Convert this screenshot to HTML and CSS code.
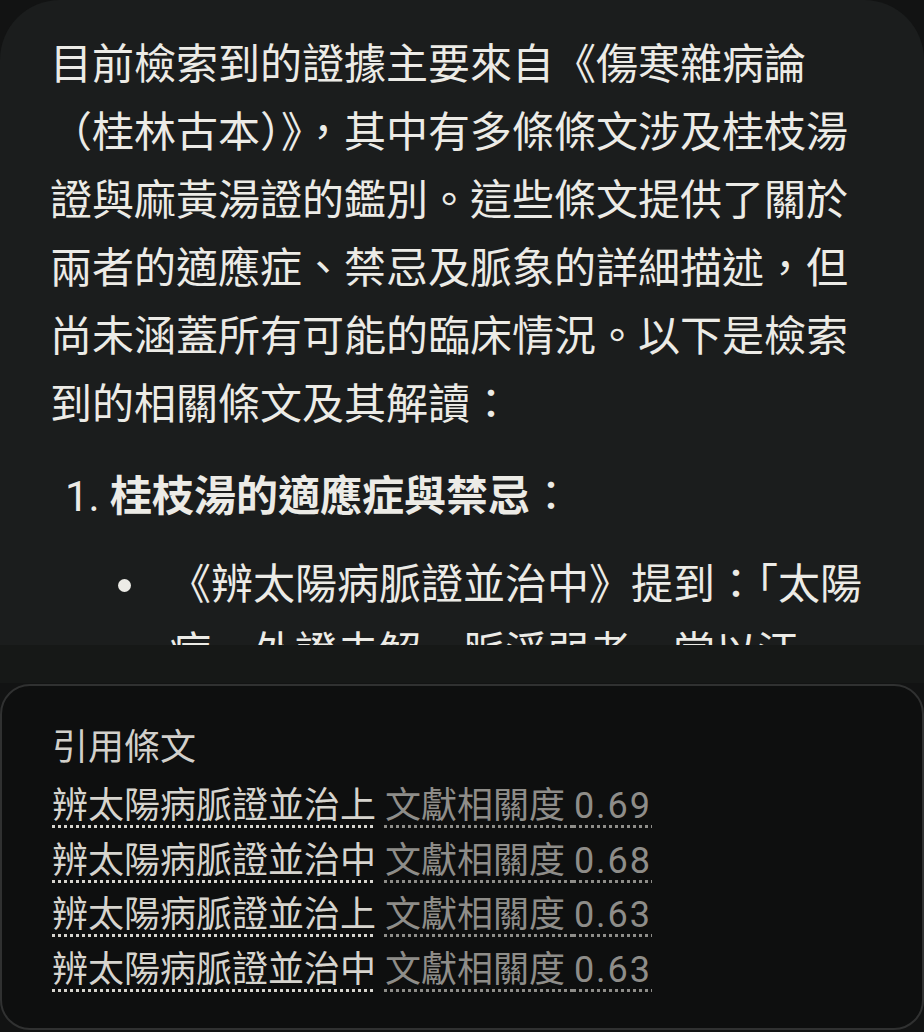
FILE: index.html
```html
<!DOCTYPE html>
<html lang="zh-Hant">
<head>
    <meta charset="UTF-8">
    <title>檢索回覆</title>
    <link rel="stylesheet" href="styles.css">
</head>
<body>
    <div class="chat">
        <div class="message">
            <p>目前檢索到的證據主要來自《傷寒雜病論（桂林古本）》，其中有多條條文涉及桂枝湯證與麻黃湯證的鑑別。這些條文提供了關於兩者的適應症、禁忌及脈象的詳細描述，但尚未涵蓋所有可能的臨床情況。以下是檢索到的相關條文及其解讀：</p>
            <ol>
                <li><strong>桂枝湯的適應症與禁忌</strong>：
                    <ul>
                        <li>《辨太陽病脈證並治中》提到：「太陽病，外證未解，脈浮弱者，當以汗解，宜桂枝湯。」</li>
                    </ul>
                </li>
            </ol>
        </div>
        <div class="fade"></div>

        <div class="citations">
            <h2>引用條文</h2>
            <div class="cite-row"><a class="cite-title">辨太陽病脈證並治上</a> <a class="cite-score">文獻相關度 <span class="num">0.69</span></a></div>
            <div class="cite-row"><a class="cite-title">辨太陽病脈證並治中</a> <a class="cite-score">文獻相關度 <span class="num">0.68</span></a></div>
            <div class="cite-row"><a class="cite-title">辨太陽病脈證並治上</a> <a class="cite-score">文獻相關度 <span class="num">0.63</span></a></div>
            <div class="cite-row"><a class="cite-title">辨太陽病脈證並治中</a> <a class="cite-score">文獻相關度 <span class="num">0.63</span></a></div>
        </div>
    </div>
</body>
</html>
```

FILE: styles.css
```css
html, body { margin: 0; padding: 0; background: #121313; }
body { font-family: Roboto, "Noto Sans CJK TC", sans-serif; color: #ecebe6; width: 924px; height: 1032px; overflow: hidden; }

.chat { display: flex; flex-direction: column; }

.message { background: #1b1d1d; border-radius: 60px 60px 0 0; height: 645px; box-sizing: border-box; padding: 31px 50px 0 50px; overflow: hidden; font-size: 42px; line-height: 68px; }
.message p { margin: 0 0 24px 0; }
.message ol { margin: 0; padding-left: 60px; }
.message ul { margin: 20px 0 0 0; padding-left: 41px; list-style-type: disc; }
.message ul li { padding-left: 18px; }
.message strong { font-weight: 700; }

.fade { height: 38px; background: #161817; }

.citations { margin-top: 1px; background: #0e0f0f; border: 2px solid #303131; border-radius: 30px; padding: 37px 50px 31px 50px; }
.citations h2 { margin: 0 0 6px 0; font-size: 36px; line-height: 50px; font-weight: 400; color: #d2d0cb; }
.cite-row { font-size: 36px; line-height: 54.5px; white-space: nowrap; }
.cite-row a { text-decoration: underline dotted 3px; text-underline-offset: 7px; }
.cite-title { color: #d6d4ce; }
.cite-score { color: #8e8d89; }
.cite-score .num { letter-spacing: 2px; }
```
